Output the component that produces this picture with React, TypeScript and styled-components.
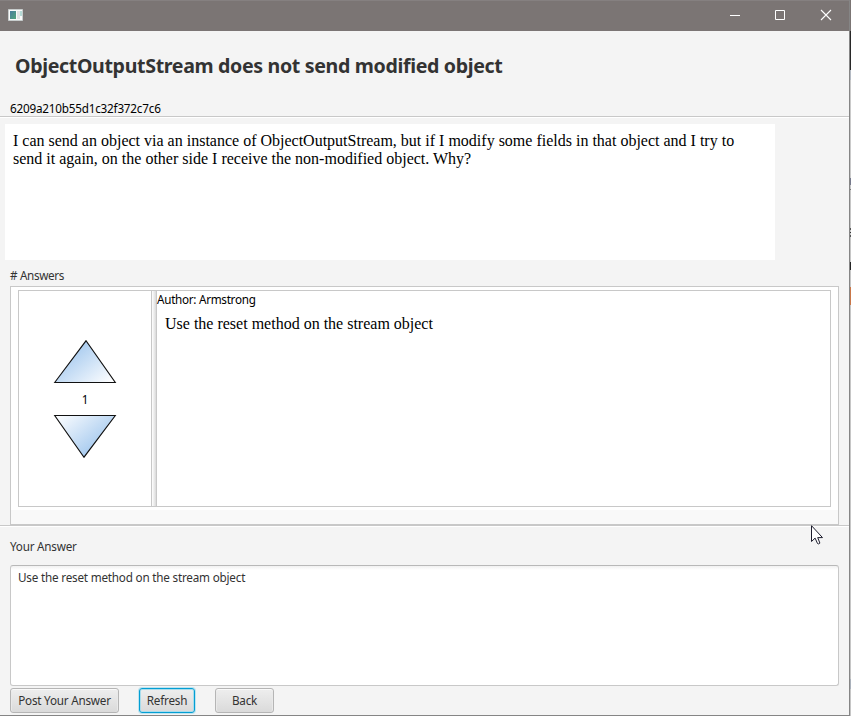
import React from "react";
import styled, { createGlobalStyle } from "styled-components";

const GlobalStyle = createGlobalStyle`
  * { box-sizing: border-box; }
  html, body { margin: 0; padding: 0; overflow: hidden; }
  body { font: 11.7px/16px "Noto Sans", "Segoe UI", sans-serif; color: #333; background: #c6c6c8; }
`;

const Screen = styled.div`
  position: relative;
  display: flex;
  width: 851px;
  height: 716px;
`;

const Window = styled.main`
  display: flex;
  flex-direction: column;
  width: 850px;
  height: 716px;
  background: #f4f4f4;
  border-right: 1px solid #858585;
  border-bottom: 1px solid #858585;
`;

const Backdrop = styled.div`
  flex: 1;
  background: linear-gradient(
    #7b7574 0 31px, #282828 31px 70px, #b4bac3 70px 80px, #cacaca 80px 178px,
    #767a8c 178px 185px, #c6c6c6 185px 189px, #777 189px 190px, #c6c6c6 190px 228px,
    #555 228px 230px, #c6c6c6 230px 232px, #333 232px 233px, #c6c6c6 233px 235px,
    #555 235px 237px, #c6c6c6 237px 262px, #252525 262px 270px, #c6c6c6 270px 287px,
    #c97749 287px 305px, #c6c6c6 305px 679px, #aab1bb 679px 689px, #c6c6c6 689px
  );
`;

const TitleBar = styled.header`
  display: flex;
  justify-content: space-between;
  height: 31px;
  background: #7b7574;
  border-top: 1px solid #858080;
`;

const AppIcon = styled.svg`
  width: 16px;
  height: 14px;
  margin: 7px 0 0 8px;
`;

const Controls = styled.div`
  display: flex;
`;

const Control = styled.button`
  width: 46px;
  height: 28px;
  padding: 0;
  border: 0;
  background: none;
  svg { display: block; margin: 0 auto; }
`;

const Header = styled.section`
  height: 87px;
  padding: 21px 10px 0;
  border-bottom: 1px solid #fff;
  box-shadow: inset 0 -1px #c8c8c8;
`;

const Title = styled.h1`
  margin: 0 0 0 5px;
  font: 700 19.6px/28px "Noto Sans", "Segoe UI", sans-serif;
  letter-spacing: -0.35px;
  white-space: nowrap;
`;

const Label = styled.div<{ $spacing?: number; $dark?: boolean }>`
  height: 16px;
  line-height: 14px;
  color: ${p => (p.$dark ? "#000" : "#333")};
  letter-spacing: ${p => p.$spacing ?? 0}px;
  white-space: nowrap;
`;

const Identifier = styled(Label)`
  margin-top: 21px;
`;

const Question = styled.article`
  width: 770px;
  height: 136px;
  margin: 6px 0 0 5px;
  padding: 8px;
  background: #fff;
  color: #000;
  font: 16px/18px "Liberation Serif", "Times New Roman", serif;
  white-space: nowrap;
`;

const AnswersHeading = styled(Label)`
  margin: 8px 0 2px 10px;
`;

const AnswerList = styled.section`
  width: 829px;
  height: 239px;
  margin-left: 10px;
  padding: 3px 7px 0;
  border: 1px solid #c8c8c8;
  background: linear-gradient(#fff 0 223px, #f9f9f9 223px);
`;

const SplitPane = styled.div`
  display: grid;
  grid-template-columns: 132px 6px 1fr;
  height: 217px;
  border: 1px solid #c8c8c8;
  background: #fff;
`;

const Votes = styled.div`
  display: flex;
  flex-direction: column;
  align-items: center;
  padding-top: 48px;
`;

const VoteCount = styled(Label)`
  margin: 8px 0 6px;
`;

const Arrow = styled.svg`
  display: block;
  width: 64px;
  height: 45px;
`;

const Divider = styled.div`
  border: solid #c8c8c8;
  border-width: 0 1px;
  background: linear-gradient(90deg, #fff, #ececec 50%, #dadada);
`;

const AnswerBody = styled.article`
  padding-top: 1px;
`;

const AnswerText = styled.p`
  margin: 7px 8px;
  color: #000;
  font: 16px/18px "Liberation Serif", "Times New Roman", serif;
`;

const Reply = styled.section`
  display: flex;
  flex-direction: column;
  height: 190px;
  border-top: 1px solid #c8c8c8;
  box-shadow: inset 0 1px #fff;
  padding: 13px 10px 0;
`;

const ReplyBox = styled.textarea`
  display: block;
  width: 829px;
  height: 121px;
  margin: 10px 0 2px;
  padding: 3px 7px;
  border: 1px solid #c8c8c8;
  border-top-color: #b8b8b8;
  border-radius: 3px;
  outline: 0;
  resize: none;
  background: linear-gradient(#f1f1f1, #fff 4px);
  color: #333;
  font: 11.7px/16px "Noto Sans", "Segoe UI", sans-serif;
  letter-spacing: -0.2px;
`;

const Actions = styled.div`
  display: flex;
`;

const Button = styled.button<{ $width: number; $focused?: boolean }>`
  width: ${p => p.$width}px;
  height: 25px;
  margin-right: 20px;
  padding: 0 0 2px;
  border: 1px solid ${p => (p.$focused ? "#039ed3" : "#b5b5b5")};
  border-radius: 3px;
  background: linear-gradient(#eee, #dadada);
  box-shadow: ${p => (p.$focused
    ? "inset 0 0 0 1px #a9dcec, 0 0 0 1px #bde4f0"
    : "inset 0 1px #fafafa, inset 1px 0 #e9e9e9, inset -1px 0 #e9e9e9")};
  color: #333;
  font: 11.7px/16px "Noto Sans", "Segoe UI", sans-serif;
  letter-spacing: -0.22px;
  white-space: nowrap;
`;

const Pointer = styled.svg`
  position: absolute;
  left: 811px;
  top: 525px;
  width: 13px;
  height: 20px;
`;

function VoteArrow({ down = false }: { down?: boolean }) {
  const id = down ? "downFill" : "upFill";
  return (
    <Arrow viewBox="0 0 64 45">
      <defs>
        <linearGradient id={id} x1={down ? "0" : "0.2"} y1={down ? "0" : "0.35"} x2={down ? "0.75" : "0.95"} y2={down ? "0.65" : "1"}>
          <stop offset="0" stopColor={down ? "#fff" : "#abcdf0"} />
          <stop offset="1" stopColor={down ? "#abcdf0" : "#fff"} />
        </linearGradient>
      </defs>
      <path d={down ? "M1.7 1.5H62.3L31 43.2Z" : "M1.7 43.5L33 1.8L62.3 43.5Z"} fill={`url(#${id})`} stroke="#111" strokeWidth="1.1" />
    </Arrow>
  );
}

export default function App() {
  return (
    <Screen>
      <GlobalStyle />
      <Window>
        <TitleBar>
          <AppIcon viewBox="0 0 16 14">
            <defs>
              <linearGradient id="screenFill" x1="0" y1="0" x2="1" y2="1">
                <stop stopColor="#4a7d9e" /><stop offset="1" stopColor="#53a47b" />
              </linearGradient>
            </defs>
            <path fill="#fafafa" stroke="#c7cccc" d="M.5 1.5h14v11H.5z" />
            <path fill="url(#screenFill)" d="M2 3h6v8H2z" />
            <path fill="#e1e3e4" d="M9 3h3v8H9z" />
            <path fill="#b5d9d5" d="M12 3h2v5h-2z" />
          </AppIcon>
          <Controls>
            <Control aria-label="Minimize"><svg width="12" height="12"><path stroke="#fff" d="M2 6.5h10" /></svg></Control>
            <Control aria-label="Maximize"><svg width="12" height="12"><path fill="none" stroke="#fff" d="M1.5 1.5h9v9h-9z" /></svg></Control>
            <Control aria-label="Close"><svg width="12" height="12"><path stroke="#fff" strokeWidth="1.1" d="m1 1 10 10M11 1 1 11" /></svg></Control>
          </Controls>
        </TitleBar>
        <Header>
          <Title>ObjectOutputStream does not send modified object</Title>
          <Identifier $dark $spacing={-0.2}>6209a210b55d1c32f372c7c6</Identifier>
        </Header>
        <Question>
          I can send an object via an instance of ObjectOutputStream, but if I modify some fields in that object and I try to<br />
          send it again, on the other side I receive the non-modified object. Why?
        </Question>
        <AnswersHeading $spacing={-0.34}># Answers</AnswersHeading>
        <AnswerList>
          <SplitPane>
            <Votes>
              <VoteArrow />
              <VoteCount $dark>1</VoteCount>
              <VoteArrow down />
            </Votes>
            <Divider />
            <AnswerBody>
              <Label $dark $spacing={-0.28}>Author: Armstrong</Label>
              <AnswerText>Use the reset method on the stream object</AnswerText>
            </AnswerBody>
          </SplitPane>
        </AnswerList>
        <Reply>
          <Label $spacing={-0.22}>Your Answer</Label>
          <ReplyBox spellCheck={false} defaultValue="Use the reset method on the stream object" />
          <Actions>
            <Button $width={109}>Post Your Answer</Button>
            <Button $width={56} $focused>Refresh</Button>
            <Button $width={59}>Back</Button>
          </Actions>
        </Reply>
      </Window>
      <Backdrop />
      <Pointer viewBox="0 0 13 20">
        <path d="M.5.7v15.8l3.6-3.4 2.4 5.4q1 1 2.4-.4l-2.2-5.5h4.8Z" fill="#fff" stroke="#1d1d2d" />
      </Pointer>
    </Screen>
  );
}
